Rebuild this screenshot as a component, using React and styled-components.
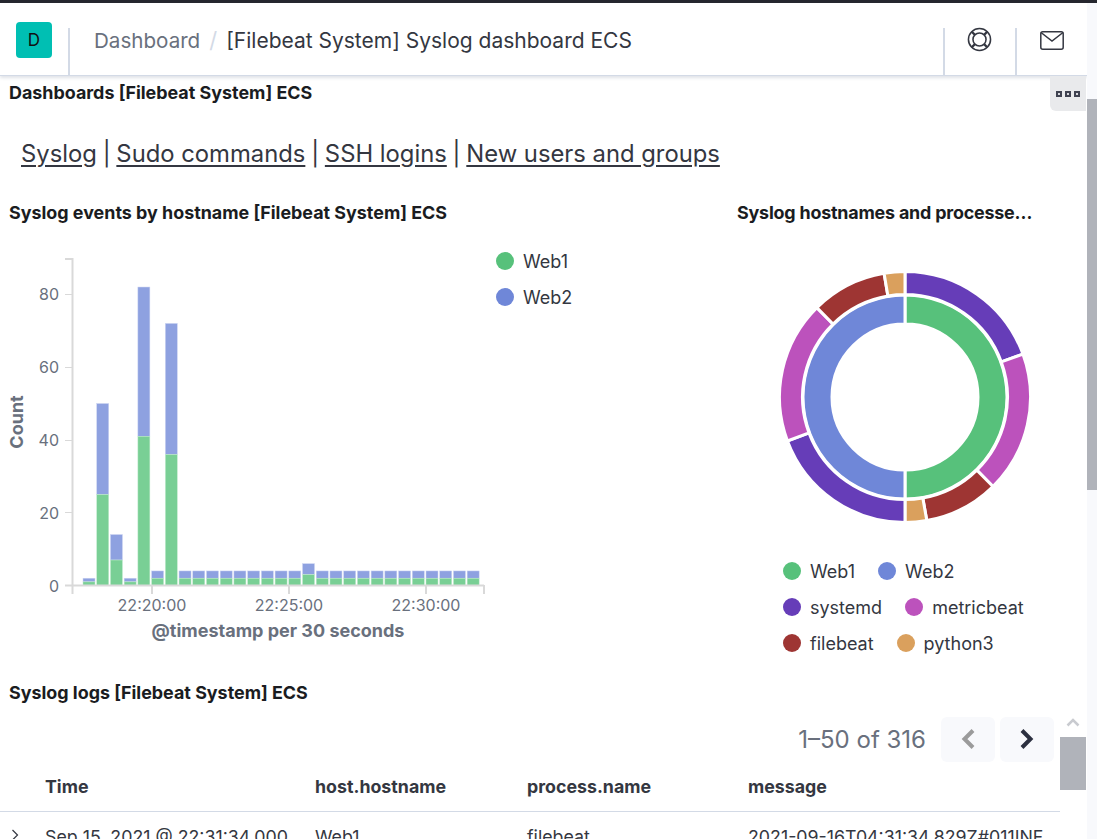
import React from 'react';
import styled, { createGlobalStyle } from 'styled-components';

const FONT = 'Inter, "Liberation Sans", sans-serif';

const GlobalStyle = createGlobalStyle`
  html, body {
    margin: 0;
    padding: 0;
    background: #fff;
    font-family: ${FONT};
    overflow: hidden;
  }
  * { box-sizing: border-box; }
`;

const COLORS = {
  web1: '#57c17b',
  web2: '#6f87d8',
  systemd: '#663db8',
  metricbeat: '#bc52bc',
  filebeat: '#9e3533',
  python3: '#daa05d',
};

// stacked bars, half web1 half web2
const TOTALS = [2, 50, 14, 2, 82, 4, 72, 4, 4, 4, 4, 4, 4, 4, 4, 4, 6, 4, 4, 4, 4, 4, 4, 4, 4, 4, 4, 4, 4];

const polar = (r, deg) => {
  const a = ((deg - 90) * Math.PI) / 180;
  return [135 + r * Math.cos(a), 135 + r * Math.sin(a)];
};

const arc = (r0, r1, from, to) => {
  const large = to - from > 180 ? 1 : 0;
  const [x0, y0] = polar(r1, from);
  const [x1, y1] = polar(r1, to);
  const [x2, y2] = polar(r0, to);
  const [x3, y3] = polar(r0, from);
  return `M${x0} ${y0}A${r1} ${r1} 0 ${large} 1 ${x1} ${y1}L${x2} ${y2}A${r0} ${r0} 0 ${large} 0 ${x3} ${y3}Z`;
};

const INNER = [
  [COLORS.web1, 0, 180],
  [COLORS.web2, 180, 360],
];

const OUTER = [
  [COLORS.systemd, 0, 70],
  [COLORS.metricbeat, 70, 135.5],
  [COLORS.filebeat, 135.5, 170],
  [COLORS.python3, 170, 180],
  [COLORS.systemd, 180, 249.5],
  [COLORS.metricbeat, 249.5, 315.4],
  [COLORS.filebeat, 315.4, 350.4],
  [COLORS.python3, 350.4, 360],
];

const BarChart = () => {
  const y = (v) => 327.5 - v * 3.64;
  return (
    <ChartSvg width="486" height="394" viewBox="0 0 486 394">
      {TOTALS.map((total, i) => {
        const x = 83 + i * 13.72;
        const half = total / 2;
        return (
          <g key={i}>
            <rect x={x} y={y(total)} width="12" height={half * 3.64} fill="#8ea1e0" stroke="#cdd5f2" strokeWidth="0.5" />
            <rect x={x} y={y(half)} width="12" height={half * 3.64} fill="#79cf95" stroke="#c4ebd0" strokeWidth="0.5" />
          </g>
        );
      })}
      <path d="M65 1H72.500V336M65 327.500H484M484 327V336M152 327V336M289 327V336M426 327V336" fill="none" stroke="#d9d9d9" strokeWidth="2" />
      <path d="M65 36.500H72M65 109.500H72M65 182.500H72M65 254.500H72" fill="none" stroke="#d9d9d9" strokeWidth="1" />
      {[[80, 42], [60, 115], [40, 188], [20, 261], [0, 334]].map(([label, ty]) => (
        <AxisText key={label} x="59" y={ty} textAnchor="end">{label}</AxisText>
      ))}
      {[['22:20:00', 152], ['22:25:00', 289], ['22:30:00', 426]].map(([label, tx]) => (
        <AxisText key={label} x={tx} y="353" textAnchor="middle">{label}</AxisText>
      ))}
      <AxisTitle x="278" y="379" textAnchor="middle">@timestamp per 30 seconds</AxisTitle>
      <AxisTitle transform="translate(23 164) rotate(-90)" textAnchor="middle">Count</AxisTitle>
    </ChartSvg>
  );
};

const Donut = () => (
  <DonutSvg width="270" height="270" viewBox="0 0 270 270">
    {INNER.map(([color, from, to]) => (
      <path key={from} d={arc(73, 102, from, to)} fill={color} stroke="#fff" strokeWidth="3" />
    ))}
    {OUTER.map(([color, from, to]) => (
      <path key={from} d={arc(102.500, 125.500, from, to)} fill={color} stroke="#fff" strokeWidth="3" />
    ))}
  </DonutSvg>
);

const LifeRing = () => (
  <svg width="25" height="25" viewBox="0 0 26 26" fill="none" stroke="#343741" strokeWidth="1.600">
    <circle cx="13" cy="13" r="11.500" />
    <circle cx="13" cy="13" r="6.800" />
    <path d="M5 5l3.500 3.500M21 5l-3.500 3.500M5 21l3.500-3.500M21 21l-3.500-3.500" strokeWidth="2.400" />
  </svg>
);

const Mail = () => (
  <svg width="24" height="19" viewBox="0 0 24 19" fill="none" stroke="#343741" strokeWidth="1.500">
    <rect x="0.800" y="0.800" width="22.400" height="17.400" rx="2" />
    <path d="M1 1.500l11 8.500 11-8.500" />
  </svg>
);

const Chevron = ({ dir, disabled }) => (
  <svg width="16" height="22" viewBox="0 0 16 22" fill="none" stroke={disabled ? '#9b9b9b' : '#2c3040'} strokeWidth="4">
    <path d={dir === 'left' ? 'M13 2.500L4.500 11l8.500 8.500' : 'M3 2.500L11.500 11 3 19.500'} />
  </svg>
);

const App = () => (
  <Page>
    <GlobalStyle />
    <TopBar />
    <Header>
      <Avatar>D</Avatar>
      <HeaderDivider />
      <Crumbs>
        <CrumbLink>Dashboard</CrumbLink>
        <CrumbSlash>/</CrumbSlash>
        <CrumbCurrent>[Filebeat System] Syslog dashboard ECS</CrumbCurrent>
      </Crumbs>
      <HeaderDivider />
      <HeaderIcon $top={24} $right={2}><LifeRing /></HeaderIcon>
      <HeaderDivider />
      <HeaderIcon $top={28}><Mail /></HeaderIcon>
    </Header>
    <OptionsTab>
      <Dot /><Dot /><Dot />
    </OptionsTab>
    <Content>
      <PanelTitle>Dashboards [Filebeat System] ECS</PanelTitle>
      <Links>
        <NavLink>Syslog</NavLink>
        <Sep>|</Sep>
        <NavLink>Sudo commands</NavLink>
        <Sep>|</Sep>
        <NavLink>SSH logins</NavLink>
        <Sep>|</Sep>
        <NavLink>New users and groups</NavLink>
      </Links>
      <ChartsRow>
        <LeftPanel>
          <ChartTitle>Syslog events by hostname [Filebeat System] ECS</ChartTitle>
          <ChartBody>
            <BarChart />
            <SideLegend>
              <LegendItem><LegendDot $color={COLORS.web1} />Web1</LegendItem>
              <LegendItem><LegendDot $color={COLORS.web2} />Web2</LegendItem>
            </SideLegend>
          </ChartBody>
        </LeftPanel>
        <RightPanel>
          <RightTitle>Syslog hostnames and processe…</RightTitle>
          <Donut />
          <BottomLegend>
            <LegendRow>
              <LegendItem><LegendDot $color={COLORS.web1} />Web1</LegendItem>
              <LegendItem><LegendDot $color={COLORS.web2} />Web2</LegendItem>
            </LegendRow>
            <LegendRow>
              <LegendItem><LegendDot $color={COLORS.systemd} />systemd</LegendItem>
              <LegendItem><LegendDot $color={COLORS.metricbeat} />metricbeat</LegendItem>
            </LegendRow>
            <LegendRow>
              <LegendItem><LegendDot $color={COLORS.filebeat} />filebeat</LegendItem>
              <LegendItem><LegendDot $color={COLORS.python3} />python3</LegendItem>
            </LegendRow>
          </BottomLegend>
        </RightPanel>
      </ChartsRow>
      <LogsTitle>Syslog logs [Filebeat System] ECS</LogsTitle>
      <Pager>
        <PagerText>1–50 of 316</PagerText>
        <PagerButton><Chevron dir="left" disabled /></PagerButton>
        <PagerButton><Chevron dir="right" /></PagerButton>
      </Pager>
      <HeadRow>
        <TimeCell>Time</TimeCell>
        <HostCell>host.hostname</HostCell>
        <ProcessCell>process.name</ProcessCell>
        <MessageCell>message</MessageCell>
      </HeadRow>
      <DataRow>
        <Caret>
          <svg width="8" height="12" viewBox="0 0 8 12" fill="none" stroke="#343741" strokeWidth="1.200">
            <path d="M1.500 1l5 5-5 5" />
          </svg>
        </Caret>
        <TimeCell>Sep 15, 2021 @ 22:31:34.000</TimeCell>
        <HostCell>Web1</HostCell>
        <ProcessCell>filebeat</ProcessCell>
        <MessageCell>2021-09-16T04:31:34.829Z#011INF</MessageCell>
      </DataRow>
    </Content>
    <PageTrack>
      <PageThumb />
    </PageTrack>
    <TableScrollUp>
      <svg width="14" height="9" viewBox="0 0 14 9" fill="none" stroke="#c9cbd0" strokeWidth="2.500">
        <path d="M1.500 7.500L7 2l5.500 5.500" />
      </svg>
    </TableScrollUp>
    <TableThumb />
  </Page>
);

const Page = styled.div`
  position: relative;
  width: 1097px;
  height: 839px;
  overflow: hidden;
  background: #fff;
  color: #343741;
`;

const TopBar = styled.div`
  height: 3px;
  background: #25262e;
`;

const Header = styled.header`
  display: flex;
  align-items: stretch;
  height: 73px;
  width: 1087px;
  padding-left: 16px;
  border-bottom: 1px solid #d3dae6;
  box-shadow: 0 2px 3px rgba(152, 162, 179, 0.3);
`;

const Avatar = styled.div`
  width: 36px;
  height: 36px;
  margin: 19px 16px 0 0;
  display: flex;
  align-items: center;
  justify-content: center;
  border-radius: 4px;
  background: #00bfb3;
  color: #111;
  font-size: 17px;
`;

const HeaderDivider = styled.div`
  width: 2px;
  margin-top: 25px;
  background: #d3dae6;
`;

const Crumbs = styled.div`
  flex: 1;
  display: flex;
  align-items: baseline;
  padding: 24px 0 0 24px;
`;

const CrumbLink = styled.span`
  font-size: 20.600px;
  line-height: 26px;
  color: #69707d;
`;

const CrumbSlash = styled.span`
  margin: 0 9px;
  font-size: 22px;
  line-height: 26px;
  color: #d3dae6;
`;

const CrumbCurrent = styled.span`
  font-size: 21px;
  line-height: 26px;
  color: #343741;
`;

const HeaderIcon = styled.div`
  width: 70px;
  padding-top: ${(p) => p.$top}px;
  padding-right: ${(p) => p.$right || 0}px;
  display: flex;
  justify-content: center;
  align-items: flex-start;
`;

const OptionsTab = styled.div`
  position: absolute;
  top: 76px;
  left: 1050px;
  width: 36px;
  height: 35px;
  display: flex;
  align-items: center;
  justify-content: center;
  gap: 3px;
  background: #e9eaec;
  border-bottom-left-radius: 6px;
`;

const Dot = styled.span`
  width: 6px;
  height: 6px;
  background: #d8d9de;
  border: 2px solid #3f4250;
`;

const Content = styled.main`
  width: 1087px;
`;

const PanelTitle = styled.h2`
  margin: 0;
  padding: 6px 0 0 9px;
  height: 29px;
  font-size: 17.900px;
  line-height: 22px;
  font-weight: 700;
  color: #1a1c21;
`;

const Links = styled.div`
  display: flex;
  align-items: baseline;
  gap: 5.800px;
  padding: 32px 0 0 21px;
  height: 81px;
  font-size: 23.800px;
  line-height: 34px;
  color: #343741;
`;

const NavLink = styled.a`
  text-decoration: underline;
  text-underline-offset: 3px;
`;

const Sep = styled.span`
  color: #343741;
`;

const ChartsRow = styled.section`
  display: flex;
  height: 496px;
`;

const LeftPanel = styled.div`
  width: 737px;
  padding-top: 16px;
`;

const ChartTitle = styled.h3`
  margin: 0;
  padding-left: 9px;
  font-size: 17.900px;
  line-height: 22px;
  font-weight: 700;
  color: #1a1c21;
`;

const ChartBody = styled.div`
  display: flex;
  align-items: flex-start;
  padding-top: 34px;
`;

const ChartSvg = styled.svg`
  display: block;
  flex: none;
`;

const AxisText = styled.text`
  font-family: ${FONT};
  font-size: 16px;
  fill: #69707d;
`;

const AxisTitle = styled.text`
  font-family: ${FONT};
  font-size: 18px;
  font-weight: 700;
  fill: #69707d;
`;

const SideLegend = styled.div`
  display: flex;
  flex-direction: column;
  gap: 12px;
  margin: -9px 0 0 10px;
`;

const LegendItem = styled.div`
  display: flex;
  align-items: center;
  gap: 9px;
  height: 24px;
  font-size: 18px;
  color: #343741;
`;

const LegendDot = styled.span`
  width: 18px;
  height: 18px;
  border-radius: 50%;
  background: ${(p) => p.$color};
`;

const RightPanel = styled.div`
  width: 303px;
  padding-top: 16px;
`;

const RightTitle = styled(ChartTitle)`
  padding-left: 0;
  white-space: nowrap;
  letter-spacing: -0.2px;
`;

const DonutSvg = styled.svg`
  display: block;
  margin: 38px 0 0 33px;
`;

const BottomLegend = styled.div`
  display: flex;
  flex-direction: column;
  gap: 12px;
  padding: 27px 0 0 46px;
`;

const LegendRow = styled.div`
  display: flex;
  gap: 23px;
`;

const LogsTitle = styled(ChartTitle)`
  margin-top: 0;
  height: 34px;
`;

const Pager = styled.div`
  display: flex;
  align-items: center;
  justify-content: flex-end;
  gap: 5px;
  height: 46px;
  padding-right: 33px;
`;

const PagerText = styled.span`
  margin-right: 10px;
  font-size: 24px;
  color: #69707d;
`;

const PagerButton = styled.div`
  width: 54px;
  height: 45px;
  display: flex;
  align-items: center;
  justify-content: center;
  border-radius: 6px;
  background: #f8f9fc;
`;

const TableRow = styled.div`
  display: grid;
  grid-template-columns: 270px 212px 221px 1fr;
  width: 1060px;
  padding-left: 45px;
  position: relative;
`;

const HeadRow = styled(TableRow)`
  align-items: center;
  height: 50px;
  padding-bottom: 1px;
  border-bottom: 1px solid #d3dae6;
  font-size: 17.800px;
  font-weight: 700;
  color: #343741;
`;

const DataRow = styled(TableRow)`
  padding-top: 14px;
  font-size: 17.800px;
  line-height: 22px;
  color: #343741;
`;

const TimeCell = styled.div`
  white-space: nowrap;
`;

const HostCell = styled.div`
  white-space: nowrap;
`;

const ProcessCell = styled.div`
  white-space: nowrap;
`;

const MessageCell = styled.div`
  white-space: nowrap;
`;

const Caret = styled.div`
  position: absolute;
  left: 11px;
  top: 12px;
`;

const PageTrack = styled.div`
  position: absolute;
  top: 3px;
  right: 0;
  width: 10px;
  height: 836px;
  background: #f8f9fc;
`;

const PageThumb = styled.div`
  margin-top: 96px;
  height: 391px;
  background: #b0b3ba;
`;

const TableScrollUp = styled.div`
  position: absolute;
  top: 718px;
  left: 1066px;
  line-height: 0;
`;

const TableThumb = styled.div`
  position: absolute;
  top: 737px;
  left: 1060px;
  width: 26px;
  height: 53px;
  background: #b0b3ba;
`;

export default App;
